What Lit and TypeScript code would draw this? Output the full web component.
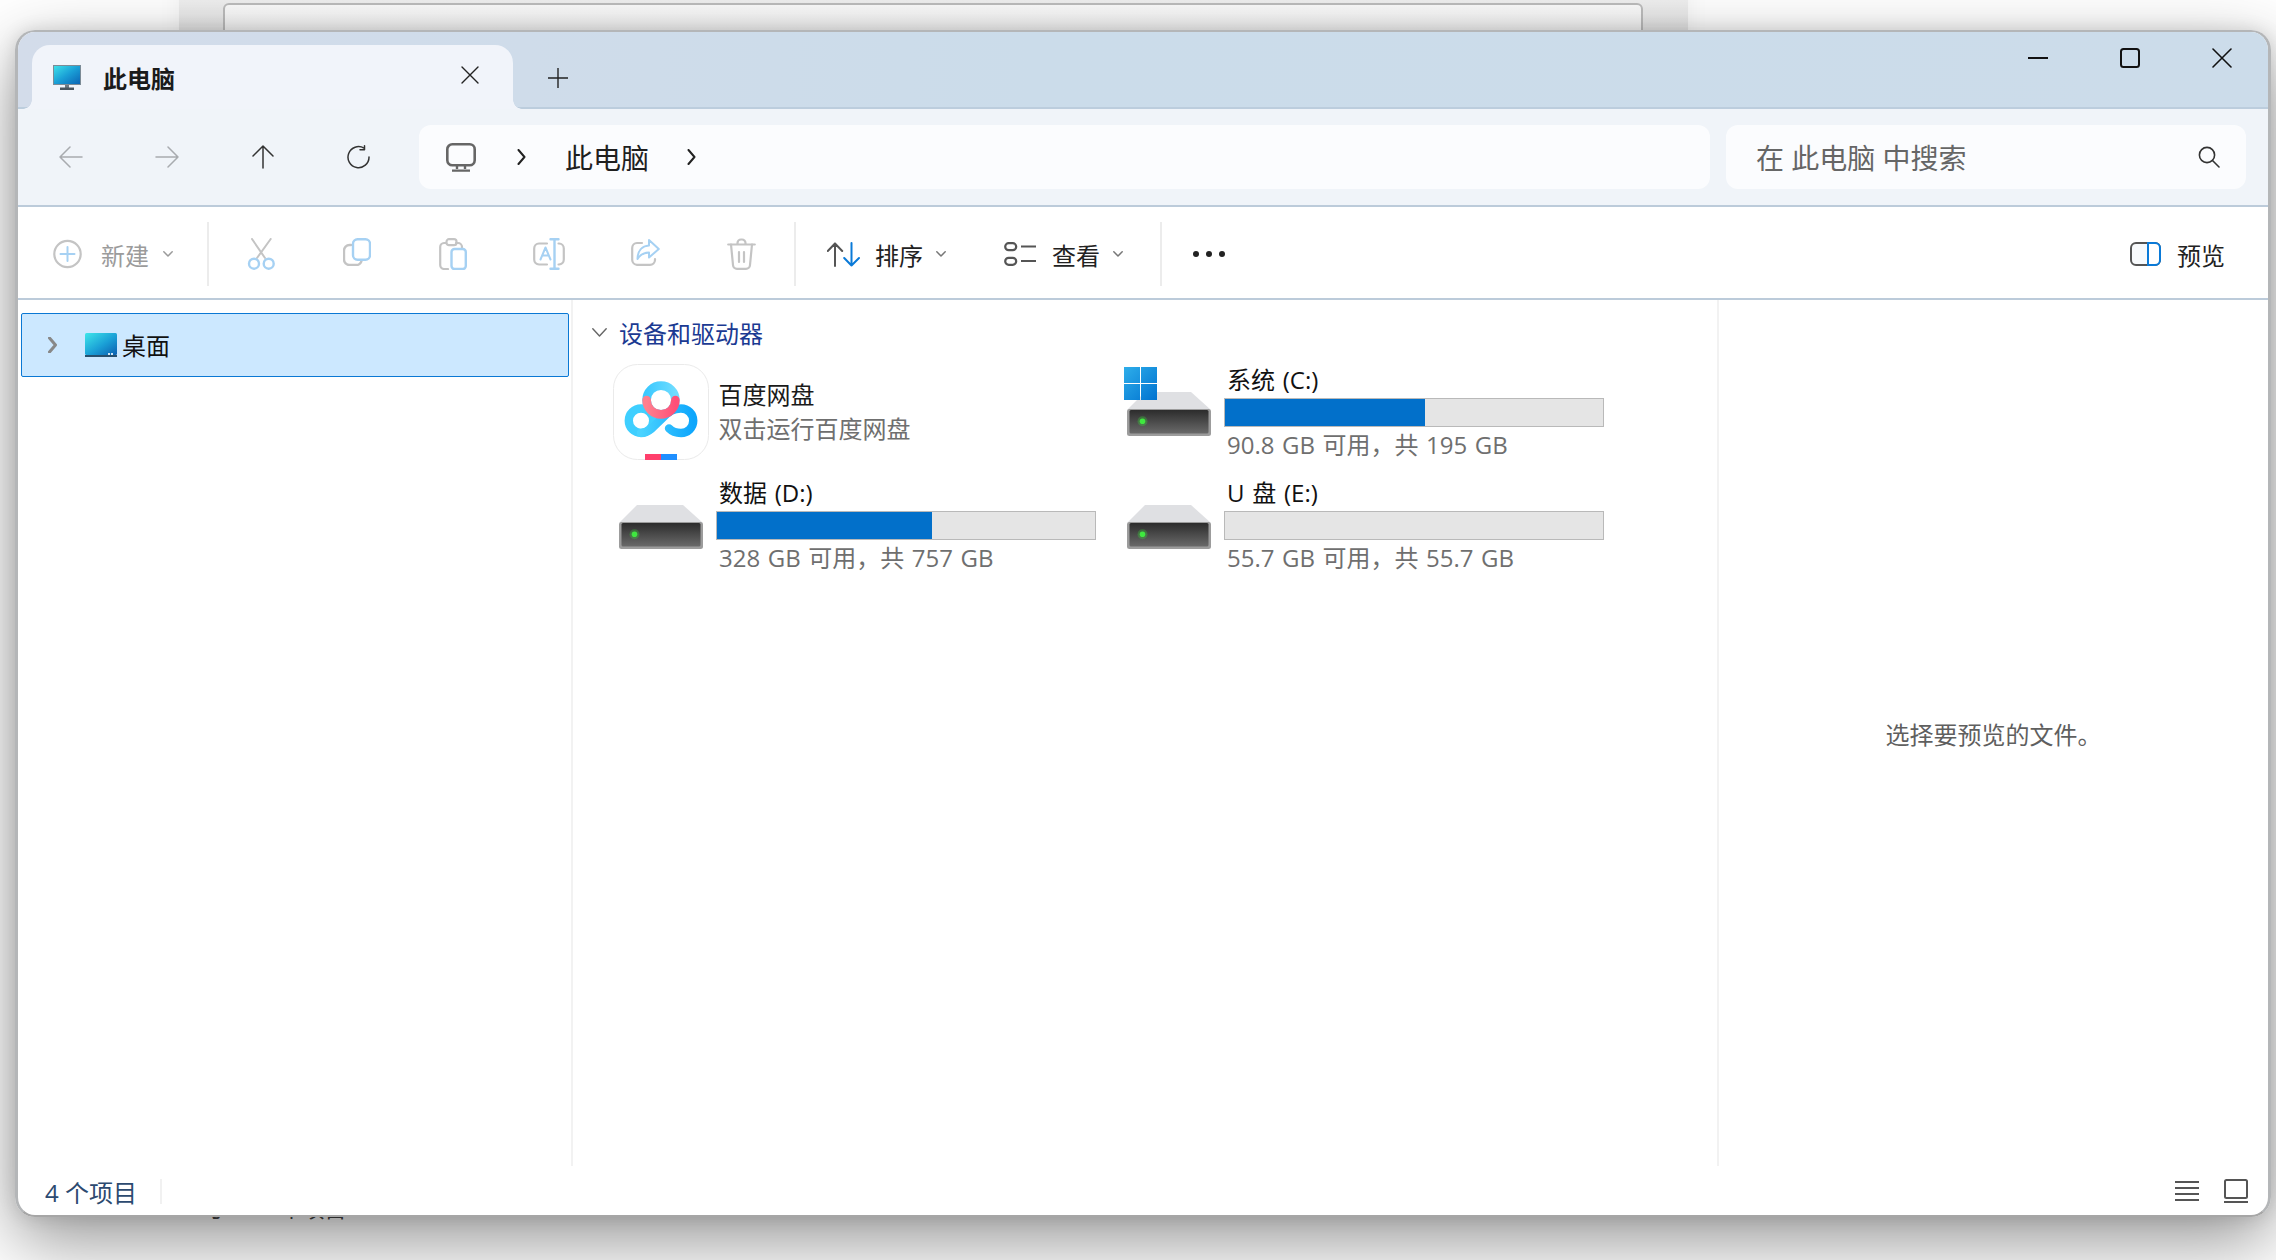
import { LitElement, html, css, svg } from "lit";
import { customElement } from "lit/decorators.js";

const GRAY = "#c4c4c4";
const BLUE = "#a6d1f3";

const line = (d: string, color: string, w = 2) =>
  svg`<path d=${d} fill="none" stroke=${color} stroke-width=${w} stroke-linecap="round" stroke-linejoin="round"/>`;

const icon = (w: number, h: number, body: unknown) =>
  html`<svg width=${w} height=${h} viewBox="0 0 ${w} ${h}">${body}</svg>`;

const chevronRight = (color = "#222", w = 2) =>
  icon(9, 16, line("M1.5 1 L7.5 8 L1.5 15", color, w));
const chevronDown = (color = "#777") =>
  icon(10, 6, line("M.8 .8 L5 5 L9.2 .8", color, 1.5));

const monitorGradient = svg`<defs>
  <linearGradient id="scr" x1="0" y1="0" x2="1" y2="1">
    <stop offset="0" stop-color="#3fe3ea"/><stop offset=".5" stop-color="#1a9fd6"/><stop offset="1" stop-color="#0b62b4"/>
  </linearGradient>
</defs>`;

const tabMonitor = icon(28, 25, svg`${monitorGradient}
  <rect x=".5" y=".5" width="27" height="19" fill="url(#scr)" stroke="#7c8b96"/>
  <rect x="12" y="20" width="4" height="3" fill="#6e7a84"/>
  <rect x="7" y="22.5" width="14" height="2.5" fill="#4a5660"/>`);

const desktopIcon = icon(32, 24, svg`
  <defs><linearGradient id="dsk" x1="0" y1="0" x2="1" y2="1">
    <stop offset="0" stop-color="#3fe6ea"/><stop offset=".55" stop-color="#1a9fd6"/><stop offset="1" stop-color="#0b5fb0"/>
  </linearGradient></defs>
  <rect width="32" height="22" rx="1.5" fill="url(#dsk)"/>
  <rect y="22" width="32" height="2" fill="#27506e"/>
  <rect x="23" y="20" width="2" height="2" fill="#cfe6f5"/><rect x="26" y="20" width="2" height="2" fill="#cfe6f5"/>`);

const navIcons = [
  icon(24, 22, line("M1 11 H23 M11 1 L1 11 L11 21", "#a8abaf", 1.5)),
  icon(24, 22, line("M1 11 H23 M13 1 L23 11 L13 21", "#a8abaf", 1.5)),
  icon(22, 24, line("M11 23 V1 M1 11 L11 1 L21 11", "#333", 1.5)),
  icon(24, 24, line("M17 3.2 A10.5 10.5 0 1 0 22 12 M17.5 .8 V4.8 H13", "#333", 1.5)),
];

const toolIcons = [
  icon(28, 32, svg`
    ${line("M5 1 L18 20 M23.7 1 L10 20", GRAY)}
    <circle cx="7" cy="25.7" r="5" fill="none" stroke=${BLUE} stroke-width="2.4"/>
    <circle cx="21.7" cy="25.7" r="5" fill="none" stroke=${BLUE} stroke-width="2.4"/>`),
  icon(28, 28, svg`
    ${line("M8 7 H6.5 A5.5 5.5 0 0 0 1 12.5 V21.5 A5.5 5.5 0 0 0 6.5 27 H13 A5.5 5.5 0 0 0 18.5 23", GRAY, 2.4)}
    <rect x="10" y="1.2" width="17" height="20.5" rx="4.5" fill="none" stroke=${BLUE} stroke-width="2.4"/>`),
  icon(28, 32, svg`
    ${line("M7 5 H5 A4 4 0 0 0 1.2 9 V27 A4 4 0 0 0 5 31 H9 M17 5 H19 A4 4 0 0 1 23 9 V10", GRAY, 2.2)}
    <rect x="7.5" y="1.2" width="10" height="6" rx="2.5" fill="none" stroke=${GRAY} stroke-width="2.2"/>
    <rect x="12.5" y="11" width="14.3" height="20" rx="3" fill="none" stroke=${BLUE} stroke-width="2.4"/>`),
  icon(32, 32, svg`
    ${line("M14 5.5 H6 A5 5 0 0 0 1.2 10.5 V21.5 A5 5 0 0 0 6 26.5 H14 M25.5 5.5 H26 A5 5 0 0 1 30.8 10.5 V21.5 A5 5 0 0 1 26 26.5 H25.5", GRAY, 2.2)}
    ${line("M7.5 21.5 L12.5 9.5 L17.5 21.5 M9.5 17.5 H15.5", BLUE, 2)}
    ${line("M17.5 1.2 H25.5 M21.5 1.2 V30.8 M17.5 30.8 H25.5", BLUE, 2.4)}`),
  icon(29, 28, svg`
    ${line("M11 5 H6 A5 5 0 0 0 1.2 10 V22 A5 5 0 0 0 6 26.8 H19 A5 5 0 0 0 24 22 V21", GRAY, 2.2)}
    ${line("M18 2 L27.8 11 L18 19.5 V14.5 C12 14.5 9 17 6.5 21 C6.5 13 11 8 18 7.5 Z", BLUE, 2)}`),
  icon(29, 32, svg`
    ${line("M1.2 6.5 H27.8 M10.5 6.5 V5 A3.5 3.5 0 0 1 14 1.5 H15 A3.5 3.5 0 0 1 18.5 5 V6.5", GRAY, 2.2)}
    ${line("M4 6.5 L6 27 A4 4 0 0 0 10 30.8 H19 A4 4 0 0 0 23 27 L25 6.5 M12 14 V24 M17 14 V24", GRAY, 2.2)}`),
];

const baiduTile = icon(96, 96, svg`
  <defs>
    <linearGradient id="bdb" x1="0" y1="0" x2="1" y2="0">
      <stop offset="0" stop-color="#4ad3ff"/><stop offset="1" stop-color="#0ea6fc"/>
    </linearGradient>
    <linearGradient id="bdt" x1="0" y1="0" x2="1" y2="0">
      <stop offset="0" stop-color="#3cc9ff"/><stop offset="1" stop-color="#6fdcff"/>
    </linearGradient>
    <linearGradient id="bdr" x1="0" y1="0" x2="1" y2="0">
      <stop offset="0" stop-color="#ff7f8e"/><stop offset="1" stop-color="#ff4f78"/>
    </linearGradient>
  </defs>
  <rect x=".5" y=".5" width="95" height="95" rx="24" fill="#fff" stroke="#eaeaea"/>
  <circle cx="48" cy="36" r="14.4" fill="none" stroke="url(#bdt)" stroke-width="8.6"/>
  <circle cx="28" cy="56.7" r="12.2" fill="none" stroke="#3fcfff" stroke-width="8.4"/>
  <path d="M56 64.4 C59 67.5 63 69 68 69 A12.2 12.2 0 0 0 68 44.5 C60 44.5 55.5 48 50 53.5 L38 65 C35 67.5 32 69 28 69" fill="none" stroke="url(#bdb)" stroke-width="8.4" stroke-linecap="round"/>
  <path d="M33.6 36 A14.4 14.4 0 0 0 62.4 36" fill="none" stroke="url(#bdr)" stroke-width="8.6" stroke-linecap="round"/>
  <rect x="32" y="90" width="16" height="6" fill="#ff3f6c"/>
  <rect x="48" y="90" width="16" height="6" fill="#1f8fff"/>`);

const driveIcon = (id: string) => icon(84, 44, svg`
  <defs><linearGradient id=${id} x1="0" y1="0" x2="0" y2="1">
    <stop offset="0" stop-color="#2c2c2c"/><stop offset="1" stop-color="#6a6a6a"/>
  </linearGradient></defs>
  <path d="M18 0 H64 L84 18 H0 Z" fill="#dfe0e3"/>
  <rect y="17" width="84" height="27" rx="2.5" fill="#9c9c9c"/>
  <rect x="2.5" y="18" width="79" height="23.5" rx="1.5" fill="url(#${id})"/>
  <circle cx="15.5" cy="29.3" r="5" fill="#35ff35" opacity=".25"/>
  <circle cx="15.5" cy="29.3" r="2.8" fill="#3fe83f"/>`);

const winLogo = icon(33, 33, svg`
  <defs><linearGradient id="win" x1="0" y1="0" x2="1" y2="1">
    <stop offset="0" stop-color="#2eaeea"/><stop offset="1" stop-color="#0072d0"/>
  </linearGradient></defs>
  <path d="M0 0 H16 V16 H0 Z M17 0 H33 V16 H17 Z M0 17 H16 V33 H0 Z M17 17 H33 V33 H17 Z" fill="url(#win)"/>`);

type Drive = { name: string; free: string; used?: number; system?: boolean };

const drives: Drive[] = [
  { name: "系统 (C:)", free: "90.8 GB 可用，共 195 GB", used: 53, system: true },
  { name: "数据 (D:)", free: "328 GB 可用，共 757 GB", used: 57 },
  { name: "U 盘 (E:)", free: "55.7 GB 可用，共 55.7 GB", used: 0 },
];

@customElement("app-root")
export class AppRoot extends LitElement {
  static styles = css`
    :host {
      display: block;
      position: relative;
      width: 2276px;
      height: 1260px;
      box-sizing: border-box;
      padding: 30px 5px 43px 15px;
      overflow: hidden;
      background: #fff;
      font-family: "Open Sans", "Noto Sans CJK SC", sans-serif;
      font-size: 24px;
      color: #1a1a1a;
    }
    svg { display: block; flex: none; }

    .behind {
      position: absolute;
      left: 179px;
      top: -20px;
      width: 1509px;
      height: 70px;
      box-sizing: border-box;
      background: linear-gradient(#f6f6f6, #dedede);
      box-shadow: 0 0 24px rgba(0, 0, 0, .05);
    }
    .behind i {
      position: absolute;
      left: 44px;
      right: 45px;
      top: 23px;
      bottom: -10px;
      box-sizing: border-box;
      border: 2px solid #bcbcbc;
      border-radius: 6px;
      background: linear-gradient(#fbfbfb, #ececec);
    }
    .under {
      position: absolute;
      left: 207px;
      top: 1193px;
      font-size: 22px;
      line-height: 30px;
      white-space: pre;
      color: #444;
    }

    .win {
      position: relative;
      height: 1187px;
      box-sizing: border-box;
      display: flex;
      flex-direction: column;
      border: 2px solid #b4b6b8;
      border-left-width: 3px;
      border-right-width: 3px;
      border-bottom-color: #a6a6a6;
      border-radius: 20px;
      background: #fff;
      overflow: hidden;
    }
    .shadow {
      position: absolute;
      left: 15px;
      top: 30px;
      width: 2256px;
      height: 1187px;
      border-radius: 20px;
      box-shadow: 0 24px 70px rgba(0, 0, 0, .42), 0 0 18px rgba(0, 0, 0, .12);
    }

    .strip {
      flex: none;
      height: 77px;
      box-sizing: border-box;
      padding-left: 14px;
      display: flex;
      align-items: flex-start;
      background: linear-gradient(90deg, #d3dcea, #cbdcea 45%, #ccdcea);
      border-bottom: 2px solid #bccddd;
    }
    .tab {
      position: relative;
      width: 481px;
      height: 64px;
      margin-top: 13px;
      box-sizing: border-box;
      padding: 0 34px 0 21px;
      display: flex;
      align-items: center;
      background: #f1f4fa;
      border-radius: 18px 18px 0 0;
    }
    .tab::before, .tab::after {
      content: "";
      position: absolute;
      bottom: 0;
      width: 9px;
      height: 9px;
    }
    .tab::before {
      right: 100%;
      background: radial-gradient(circle at 0 0, transparent 8.5px, #f1f4fa 9px);
    }
    .tab::after {
      left: 100%;
      background: radial-gradient(circle at 100% 0, transparent 8.5px, #f1f4fa 9px);
    }
    .tab-title {
      margin-left: 22px;
      font-weight: 700;
      font-size: 24px;
      color: #1b1b1b;
    }
    .tab-close { margin: 0 0 5px auto; }
    .tab-add { margin: 36px 0 0 35px; }
    .caption {
      margin-left: auto;
      display: flex;
    }
    .caption span {
      width: 92px;
      height: 52px;
      display: flex;
      align-items: center;
      justify-content: center;
    }

    .nav {
      flex: none;
      height: 98px;
      box-sizing: border-box;
      padding: 16px 22px 0 5px;
      display: flex;
      align-items: flex-start;
      background: #f0f4f9;
      border-bottom: 2px solid #bccbda;
    }
    .nav-btn {
      width: 96px;
      height: 64px;
      flex: none;
      display: flex;
      align-items: center;
      justify-content: center;
    }
    .crumbs, .search {
      height: 64px;
      box-sizing: border-box;
      display: flex;
      align-items: center;
      background: #fbfcfe;
      border-radius: 12px;
      font-size: 28px;
    }
    .crumbs {
      flex: 1;
      margin: 0 16px 0 12px;
      padding-left: 27px;
      color: #1f1f1f;
    }
    .crumbs .chev1 { margin: 0 39px 0 41px; }
    .crumbs .chev2 { margin-left: 38px; }
    .search {
      flex: none;
      width: 520px;
      padding: 0 26px 0 30px;
      justify-content: space-between;
      color: #666;
    }

    .tools {
      flex: none;
      height: 93px;
      box-sizing: border-box;
      padding-top: 3px;
      display: flex;
      align-items: center;
      border-bottom: 2px solid #bccbda;
    }
    .sep {
      flex: none;
      width: 2px;
      height: 64px;
      background: #ececec;
    }
    .new {
      width: 189px;
      flex: none;
      box-sizing: border-box;
      padding-left: 35px;
      display: flex;
      align-items: center;
      color: #9b9b9b;
    }
    .new b { font-weight: 400; margin: 0 14px 0 19px; }
    .tool-btn {
      width: 96px;
      flex: none;
      display: flex;
      justify-content: center;
    }
    .slots { margin: 0 5px 0 4px; display: flex; }
    .menu-btn {
      display: flex;
      align-items: center;
      color: #222;
    }
    .menu-btn b { font-weight: 400; }
    .sort { margin-left: 31px; }
    .sort b { margin: 0 13px 0 15px; }
    .view { margin-left: 58px; }
    .view b { margin: 0 13px 0 16px; }
    .view + .sep { margin-left: 37px; }
    .more { margin-left: 31px; }
    .preview-btn { margin-left: auto; margin-right: 43px; }
    .preview-btn b { margin-left: 16px; }

    .main {
      flex: 1;
      min-height: 0;
      display: flex;
    }
    .side {
      flex: none;
      width: 555px;
      box-sizing: border-box;
      padding: 13px 0 0 3px;
      border-right: 2px solid #f2f2f2;
    }
    .side-row {
      width: 548px;
      height: 64px;
      box-sizing: border-box;
      padding: 0 0 1px 26px;
      display: flex;
      align-items: center;
      background: #cce8ff;
      border: 1.5px solid #0a78d4;
      border-radius: 2px;
      color: #111;
    }
    .side-row svg:first-child { margin-right: 28px; }
    .side-row span { margin-left: 5px; }

    .files {
      flex: 1;
      box-sizing: border-box;
      padding: 15px 0 0 19px;
    }
    .group {
      height: 34px;
      display: flex;
      align-items: center;
      color: #1b3a92;
    }
    .group svg { margin-right: 12px; }
    .grid {
      margin: 15px 0 0 21px;
      display: grid;
      grid-template-columns: 508px 508px;
      grid-auto-rows: 113px;
    }
    .item {
      position: relative;
      display: flex;
      align-items: flex-start;
    }
    .item .pic {
      width: 103px;
      flex: none;
      padding-top: 28px;
      box-sizing: border-box;
    }
    .item .pic svg { margin-left: 6px; }
    .item .pic.tile { padding-top: 0; }
    .item .pic.tile svg { margin-left: 0; }
    .badge {
      position: absolute;
      left: 3px;
      top: 3px;
    }
    .name { padding: 1px 0 3px 3px; line-height: 30px; color: #111; word-spacing: 1.5px; }
    .bar {
      width: 380px;
      height: 29px;
      box-sizing: border-box;
      background: #e5e5e5;
      border: 1px solid #b9b9b9;
    }
    .fill { height: 100%; background: #0270ca; }
    .sub { padding: 3px 0 0 3px; line-height: 30px; color: #6f6f6f; word-spacing: 1.3px; }
    .baidu { padding: 14px 0 0 2.5px; line-height: 34px; }
    .baidu div + div { color: #6f6f6f; }

    .pane {
      flex: none;
      width: 551px;
      box-sizing: border-box;
      border-left: 2px solid #f2f2f2;
      display: flex;
      align-items: center;
      justify-content: center;
      color: #5f5f5f;
    }

    .status {
      flex: none;
      height: 49px;
      box-sizing: border-box;
      padding: 1px 20px 0 27px;
      display: flex;
      align-items: center;
      color: #2c4a70;
    }
    .status .v { width: 2px; height: 25px; margin: 0 0 0 23px; background: #f1f1f1; }
    .status .views { margin-left: auto; display: flex; gap: 25px; align-items: center; }
  `;

  render() {
    const renderDrive = (d: Drive, i: number) => html`
      <div class="item">
        <div class="pic">${driveIcon("drv" + i)}</div>
        ${d.system ? html`<div class="badge">${winLogo}</div>` : ""}
        <div>
          <div class="name">${d.name}</div>
          <div class="bar"><div class="fill" style="width:${d.used}%"></div></div>
          <div class="sub">${d.free}</div>
        </div>
      </div>`;

    return html`
      <div class="behind"><i></i></div>
      <div class="under">丁         个项目</div>
      <div class="shadow"></div>
      <div class="win">
        <div class="strip">
          <div class="tab">
            ${tabMonitor}
            <span class="tab-title">此电脑</span>
            <span class="tab-close">${icon(18, 18, line("M1 1 L17 17 M17 1 L1 17", "#222", 1.4))}</span>
          </div>
          <span class="tab-add">${icon(20, 20, line("M10 0 V20 M0 10 H20", "#222", 1.4))}</span>
          <div class="caption">
            <span>${icon(20, 2, svg`<rect width="20" height="2" fill="#111"/>`)}</span>
            <span><svg width="20" height="20" viewBox="0 0 20 20"><rect x="1" y="1" width="18" height="18" rx="2.5" fill="none" stroke="#111" stroke-width="2"/></svg></span>
            <span>${icon(20, 20, line("M1 1 L19 19 M19 1 L1 19", "#111", 1.6))}</span>
          </div>
        </div>

        <div class="nav">
          ${navIcons.map((n) => html`<div class="nav-btn">${n}</div>`)}
          <div class="crumbs">
            ${icon(30, 29, svg`
              <rect x="1.3" y="1.3" width="27.4" height="21" rx="5" fill="none" stroke="#666" stroke-width="2.6"/>
              <path d="M11 23 V26 M19 23 V26 M6 27.6 H24" stroke="#666" stroke-width="2.4" fill="none"/>`)}
            <span class="chev1">${chevronRight()}</span>
            <span>此电脑</span>
            <span class="chev2">${chevronRight()}</span>
          </div>
          <div class="search">
            <span>在 此电脑 中搜索</span>
            ${icon(22, 22, svg`
              <circle cx="9" cy="9" r="7.6" fill="none" stroke="#333" stroke-width="1.6"/>
              ${line("M14.5 14.5 L21 21", "#333", 1.6)}`)}
          </div>
        </div>

        <div class="tools">
          <div class="new">
            ${icon(29, 30, svg`
              <circle cx="14.5" cy="15" r="13.2" fill="none" stroke=${GRAY} stroke-width="2.2"/>
              ${line("M14.5 8 V22 M7.5 15 H21.5", BLUE, 2)}`)}
            <b>新建</b>
            ${chevronDown("#9a9a9a")}
          </div>
          <div class="sep"></div>
          <div class="slots">
            ${toolIcons.map((t) => html`<div class="tool-btn">${t}</div>`)}
          </div>
          <div class="sep"></div>
          <div class="menu-btn sort">
            ${icon(33, 25, svg`
              ${line("M8 24 V1.5 M.8 9 L8 1.5 L15.2 9", "#555", 2)}
              ${line("M24.5 1 V23.5 M17.2 16 L24.5 23.5 L32 16", "#0a7ad8", 2)}`)}
            <b>排序</b>
            ${chevronDown()}
          </div>
          <div class="menu-btn view">
            ${icon(32, 24, svg`
              <rect x="1.2" y="1.2" width="11" height="7" rx="3.5" fill="none" stroke="#555" stroke-width="2.2"/>
              <rect x="1.2" y="15.8" width="11" height="7" rx="3.5" fill="none" stroke="#555" stroke-width="2.2"/>
              <path d="M17 4.5 H32 M17 19 H32" stroke="#555" stroke-width="2.2"/>`)}
            <b>查看</b>
            ${chevronDown()}
          </div>
          <div class="sep"></div>
          <div class="more">
            ${icon(32, 6, svg`<g fill="#222"><circle cx="3" cy="3" r="3"/><circle cx="16" cy="3" r="3"/><circle cx="29" cy="3" r="3"/></g>`)}
          </div>
          <div class="menu-btn preview-btn">
            ${icon(31, 24, svg`
              <rect x="1" y="1" width="29" height="22" rx="5" fill="#f8fafc" stroke="#555" stroke-width="2"/>
              <path d="M18 1 H25 A5 5 0 0 1 30 6 V18 A5 5 0 0 1 25 23 H18 Z" fill="#fff" stroke="#0a7ad8" stroke-width="2"/>`)}
            <b>预览</b>
          </div>
        </div>

        <div class="main">
          <div class="side">
            <div class="side-row">
              ${chevronRight("#888", 3)}
              ${desktopIcon}
              <span>桌面</span>
            </div>
          </div>
          <div class="files">
            <div class="group">
              ${icon(15, 9, line("M.8 .8 L7.5 8 L14.2 .8", "#666", 1.4))}
              <span>设备和驱动器</span>
            </div>
            <div class="grid">
              <div class="item">
                <div class="pic tile">${baiduTile}</div>
                <div class="baidu">
                  <div>百度网盘</div>
                  <div>双击运行百度网盘</div>
                </div>
              </div>
              ${renderDrive(drives[0], 0)}
              ${renderDrive(drives[1], 1)}
              ${renderDrive(drives[2], 2)}
            </div>
          </div>
          <div class="pane">选择要预览的文件。</div>
        </div>

        <div class="status">
          <span>4 个项目</span>
          <div class="v"></div>
          <div class="views">
            ${icon(24, 20, svg`<path d="M0 1 H24 M0 7 H24 M0 13 H24 M0 19 H24" stroke="#555" stroke-width="2"/>`)}
            ${icon(24, 24, svg`
              <rect x="1" y="1" width="22" height="18" rx="1.5" fill="none" stroke="#555" stroke-width="2"/>
              <path d="M0 23 H24" stroke="#555" stroke-width="2"/>`)}
          </div>
        </div>
      </div>
    `;
  }
}
